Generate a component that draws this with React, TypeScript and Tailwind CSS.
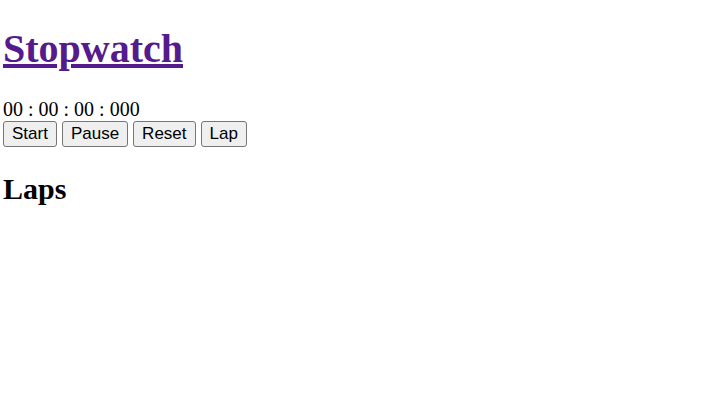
export default function App() {
  const button =
    "h-[26px] rounded-[3px] border border-[#767676] bg-[#efefef] px-2 font-['Liberation_Sans',Arial,sans-serif] text-[17px] leading-5 text-black";
  return (
    <main className="min-h-screen bg-white px-[3px] pt-[25px] font-['Liberation_Serif','Times_New_Roman',serif] text-black">
      <h1 className="text-[40px] leading-12 font-bold">
        <a href="#" className="text-[#551a8b] underline decoration-4 underline-offset-2">Stopwatch</a>
      </h1>
      <p className="mt-6 text-[20px] leading-6">00 : 00 : 00 : 000</p>
      <div className="flex gap-[5px]">
        <button type="button" className={button}>Start</button>
        <button type="button" className={button}>Pause</button>
        <button type="button" className={button}>Reset</button>
        <button type="button" className={button}>Lap</button>
      </div>
      <h2 className="mt-6 text-[30px] leading-9 font-bold">Laps</h2>
    </main>
  );
}
